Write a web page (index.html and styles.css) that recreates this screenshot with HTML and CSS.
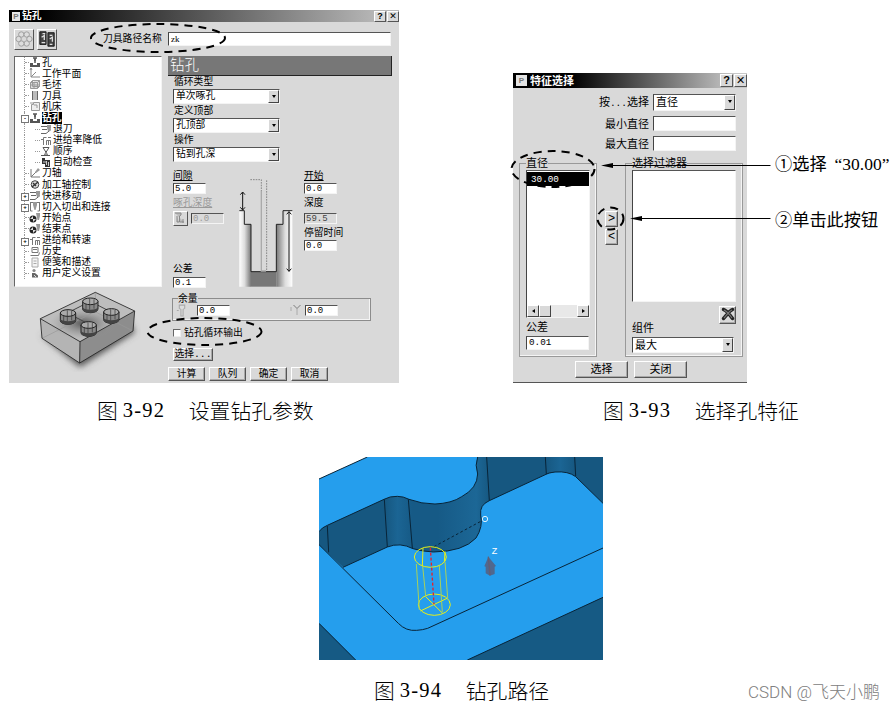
FILE: index.html
```
<!DOCTYPE html>
<html lang="zh-CN">
<head>
    <meta charset="utf-8">
    <title>钻孔</title>
    <link rel="stylesheet" href="styles.css">
</head>
<body>
    <!-- tree icons -->
    <svg class="sprite" width="0" height="0">
        <symbol id="i-hole" viewBox="0 0 12 11"><path d="M1 6h3v2h4V6h3v4H1z" fill="#555"/><path d="M4 1h4M6 1v5M5 3h2" stroke="#555" stroke-width="1.5"/></symbol>
        <symbol id="i-plane" viewBox="0 0 12 11"><path d="M2 0v9h9M2 9l5-5M1 2l1-2 1 2" stroke="#888" fill="none"/></symbol>
        <symbol id="i-block" viewBox="0 0 12 11"><path d="M1.500 3.500l2-2h7v6l-2 2h-7zM1.500 3.500h7v6M8.500 3.500l2-2M3.500 1.500v6h7M1 6h9M5 3v7" fill="#ddd" stroke="#999"/></symbol>
        <symbol id="i-tool" viewBox="0 0 12 11"><path d="M3 1h6v9H3z" fill="#bbb"/><path d="M3.500 1v9M8.500 1v9" stroke="#666"/></symbol>
        <symbol id="i-machine" viewBox="0 0 12 11"><path d="M2.500 9.500v-6h2v-2h6v8zM1 2h3M5 4h3v3" fill="#eee" stroke="#999"/></symbol>
        <symbol id="i-retract" viewBox="0 0 12 11"><path d="M1 2.500h6M2 5.500h5M1 9.500h5l5-4" stroke="#666" fill="none"/><path d="M7 1h4v3l-1 3H8L7 4z" fill="#999"/></symbol>
        <symbol id="i-feed" viewBox="0 0 12 11"><path d="M1 4.500h3M3.500 10V2.500h3M6.500 10V5.500h4V10M8 2.500h3M8.500 6v4" stroke="#777" fill="none"/></symbol>
        <symbol id="i-order" viewBox="0 0 12 11"><path d="M3 1.500h6L4 9.500M9 1.500H3l5 8M1 9.500h9" stroke="#555" fill="none"/><path d="M4 9l2-3 2 3z" fill="#999"/></symbol>
        <symbol id="i-check" viewBox="0 0 12 11"><path d="M2 1h3v2h5v7H5V7H2z" fill="#333"/><path d="M3 5h3M6.500 4v4M8.500 5v4" stroke="#ccc"/></symbol>
        <symbol id="i-axis" viewBox="0 0 12 11"><path d="M2 1v8h9M2 9l6-6" stroke="#777" fill="none"/><path d="M6 4l3-4 2 2-4 3z" fill="#999"/></symbol>
        <symbol id="i-ctrl" viewBox="0 0 12 11"><circle cx="6" cy="5.500" r="3.800" fill="#ddd" stroke="#444"/><path d="M3 8l6-5M4 4l3 3" stroke="#333" stroke-width="1.400"/></symbol>
        <symbol id="i-link" viewBox="0 0 12 11"><path d="M1.500 1v9h2M10.500 1v9h-2M1 1.500h3M8 1.500h3" stroke="#777" fill="none"/><path d="M4 1h4v3L6.500 9h-1L4 4z" fill="#999"/></symbol>
        <symbol id="i-point" viewBox="0 0 12 11"><circle cx="4" cy="7" r="3.500" fill="#222"/><path d="M4 4v3H1zM4 7h3L4 10z" fill="#ddd"/><path d="M7 1h4v3l-1 4H8.500z" fill="#999"/></symbol>
        <symbol id="i-history" viewBox="0 0 12 11"><path d="M3 1.500h6v5H3zM4 3.500h4M1.500 9.500h8l1-3" stroke="#777" fill="none"/></symbol>
        <symbol id="i-note" viewBox="0 0 12 11"><path d="M3 1h6v9H3zM4.500 4h3M4.500 6.500h3" stroke="#aaa" fill="#f4f4f4"/></symbol>
        <symbol id="i-user" viewBox="0 0 12 11"><circle cx="5" cy="2.500" r="1.600" fill="#888"/><path d="M3 9.500V5h3l3 2.500v2z" fill="#666"/><path d="M5 7l2 2" stroke="#ddd"/></symbol>
        <symbol id="i-drill" viewBox="0 0 10 12"><path d="M2.500 1h5v3L6 5v6H4V5L2.500 4zM0 6h2" fill="#ddd" stroke="#aaa"/></symbol>
    </svg>

    <div class="page">
        <div class="row">
            <div class="figure figure-drill">
                <div class="dialog drill">
                    <div class="titlebar">
                        <span class="logo">P</span><span class="title">钻孔</span>
                        <span class="winbtn">?</span><span class="winbtn">✕</span>
                    </div>
                    <div class="toolbar">
                        <span class="toolbtn"><svg viewBox="0 0 20 20" width="18" height="18"><g fill="#ddd" stroke="#999"><circle cx="7" cy="5" r="3"/><circle cx="13" cy="5" r="3"/><circle cx="16" cy="10" r="3"/><circle cx="13" cy="15" r="3"/><circle cx="7" cy="15" r="3"/><circle cx="4" cy="10" r="3"/></g></svg></span>
                        <span class="toolbtn"><svg viewBox="0 0 20 20" width="18" height="18"><path d="M2 2h7v14H2zM11 3h7v15h-7z" fill="#444" stroke="#111"/><path d="M5 4h3M4 8l3-2v5M4 14h4M13 6h3M13 10l3-2v5M13 16h3" stroke="#ddd" fill="none" stroke-width="1.500"/></svg></span>
                        <label>刀具路径名称</label>
                        <span class="input name">zk</span>
                    </div>
                    <div class="content">
                        <div class="side">
                            <ul class="tree">
                                <li><svg><use href="#i-hole"/></svg><span>孔</span></li>
                                <li><svg><use href="#i-plane"/></svg><span>工作平面</span></li>
                                <li><svg><use href="#i-block"/></svg><span>毛坯</span></li>
                                <li><svg><use href="#i-tool"/></svg><span>刀具</span></li>
                                <li><svg><use href="#i-machine"/></svg><span>机床</span></li>
                                <li class="open"><svg><use href="#i-hole"/></svg><span class="selected">钻孔</span></li>
                                <li class="sub"><svg><use href="#i-retract"/></svg><span>退刀</span></li>
                                <li class="sub"><svg><use href="#i-feed"/></svg><span>进给率降低</span></li>
                                <li class="sub"><svg><use href="#i-order"/></svg><span>顺序</span></li>
                                <li class="sub"><svg><use href="#i-check"/></svg><span>自动检查</span></li>
                                <li><svg><use href="#i-axis"/></svg><span>刀轴</span></li>
                                <li><svg><use href="#i-ctrl"/></svg><span>加工轴控制</span></li>
                                <li class="closed"><svg><use href="#i-retract"/></svg><span>快进移动</span></li>
                                <li class="closed"><svg><use href="#i-link"/></svg><span>切入切出和连接</span></li>
                                <li><svg><use href="#i-point"/></svg><span>开始点</span></li>
                                <li><svg><use href="#i-point"/></svg><span>结束点</span></li>
                                <li class="closed"><svg><use href="#i-feed"/></svg><span>进给和转速</span></li>
                                <li><svg><use href="#i-history"/></svg><span>历史</span></li>
                                <li><svg><use href="#i-note"/></svg><span>便笺和描述</span></li>
                                <li><svg><use href="#i-user"/></svg><span>用户定义设置</span></li>
                            </ul>
                            <svg class="block" viewBox="105 24 318 252" width="106" height="84">
                                <defs>
                                    <filter id="soft" x="-20%" y="-20%" width="140%" height="140%"><feGaussianBlur stdDeviation="9"/></filter>
                                    <radialGradient id="shade"><stop offset="0" stop-color="#555"/><stop offset="1" stop-color="#999" stop-opacity="0"/></radialGradient>
                                    <g id="bore"><path d="M-23 -12v23a23 11 0 0 0 46 0v-23z" fill="#888" stroke="#222" stroke-width="3"/><path d="M-23 5v7a23 11 0 0 0 46 0v-7a23 8 0 0 1-46 0z" fill="#444"/><ellipse cy="-12" rx="23" ry="10" fill="#aaa" stroke="#222" stroke-width="3"/><path d="M-13 -3v15M-2 -20v33M11 -18v28" stroke="#333" stroke-width="2"/></g>
                                </defs>
                                <path d="M123 165L240 262l165-105-20-40-145 60z" fill="#555" filter="url(#soft)"/>
                                <path d="M121 116L286 37l118 56-164 92z" fill="#bdbdbd"/>
                                <path d="M121 116l119 69-1 64-113-74z" fill="#b4b4b4"/>
                                <path d="M240 185l164-92-5 60-160 96z" fill="#8d8d8d"/>
                                <ellipse cx="250" cy="130" rx="100" ry="48" fill="url(#shade)"/>
                                <path d="M126 175L285 95l114 58M286 37v58" stroke="#999" stroke-width="2" fill="none"/>
                                <path d="M121 116L286 37l118 56-164 92zM121 116l5 59 113 74 160-96 5-60M240 185l-1 64" stroke="#222" stroke-width="2.500" fill="none"/>
                                <path d="M204 98l67-34 62 32M204 100l62 32" stroke="#444" stroke-width="3" fill="none"/>
                                <use href="#bore" x="271" y="76"/><use href="#bore" x="204" y="111"/><use href="#bore" x="334" y="108"/><use href="#bore" x="266" y="147"/>
                            </svg>
                        </div>
                        <div class="main">
                            <h2>钻孔</h2>
                            <div class="combos">
                                <label>循环类型</label><span class="combo">单次啄孔<i></i></span>
                                <label>定义顶部</label><span class="combo">孔顶部<i></i></span>
                                <label>操作</label><span class="combo">钻到孔深<i></i></span>
                            </div>
                            <div class="params">
                                <div class="col">
                                    <label class="link">间隙</label><span class="input num">5.0</span>
                                    <label class="link off">啄孔深度</label>
                                    <span class="peck"><b><svg width="12" height="12"><path d="M1 1h6v2L5.500 4v6H10M3 4v6h2M9 7v4" fill="#bbb" stroke="#888"/></svg></b><span class="input num off">0.0</span></span>
                                    <label class="tol">公差</label><span class="input num">0.1</span>
                                </div>
                                <svg class="section" viewBox="236 48 168 330" width="56" height="110">
                                    <defs>
                                        <linearGradient id="wl"><stop offset="0" stop-color="#fff"/><stop offset=".45" stop-color="#ddd"/><stop offset="1" stop-color="#777"/></linearGradient>
                                        <linearGradient id="wr"><stop offset="0" stop-color="#777"/><stop offset=".55" stop-color="#ddd"/><stop offset="1" stop-color="#fff"/></linearGradient>
                                    </defs>
                                    <path d="M240 149h15v41h20v187h-35z" fill="url(#wl)"/>
                                    <path d="M399 149h-28v41h-20v187h48z" fill="url(#wr)"/>
                                    <path d="M275 332h76v45h-76z" fill="#777"/>
                                    <path d="M240 149h15v41h20v142h76V190h20v-41h28" fill="none" stroke="#222" stroke-width="3"/>
                                    <path d="M273 56h33v34M322 58v272" stroke="#888" stroke-width="3" stroke-dasharray="5 3" fill="none"/>
                                    <path d="M306 90v240h14" stroke="#aaa" stroke-width="4" fill="none"/>
                                    <path d="M250 94v52M243 101l7-8 7 8M243 139l7 8 7-8M389 152v179M382 160l7-8 7 8M382 323l7 8 7-8" stroke="#111" stroke-width="3" fill="none"/>
                                </svg>
                                <div class="col">
                                    <label class="link">开始</label><span class="input num">0.0</span>
                                    <label class="tall">深度</label><span class="input num off depth">59.5</span>
                                    <label>停留时间</label><span class="input num">0.0</span>
                                </div>
                            </div>
                            <fieldset class="allow">
                                <legend>余量</legend>
                                <svg width="12" height="13" viewBox="0 0 10 12"><use href="#i-drill"/></svg>
                                <span class="input num">0.0</span>
                                <svg class="second" width="12" height="12" viewBox="0 0 12 12"><path d="M1 3v4M3 1l4 4v6M11 1L7 5M4 1l3 3 3-3" stroke="#aaa" fill="none"/></svg>
                                <span class="input num">0.0</span>
                            </fieldset>
                            <div class="check"><i></i><span>钻孔循环输出</span></div>
                            <span class="btn pick">选择...</span>
                            <div class="buttons">
                                <span class="btn">计算</span><span class="btn">队列</span><span class="btn">确定</span><span class="btn">取消</span>
                            </div>
                        </div>
                    </div>
                </div>
                <svg class="marks" width="390" height="373" viewBox="9 10 390 373">
                    <ellipse cx="158" cy="38" rx="67" ry="14"/>
                    <ellipse cx="204.500" cy="331.500" rx="57" ry="13.500"/>
                </svg>
                <div class="caption">图<em>3-92</em><span>设置钻孔参数</span></div>
            </div>

            <div class="figure figure-select">
                <div class="dialog select">
                    <div class="titlebar">
                        <span class="logo">P</span><span class="title">特征选择</span>
                        <span class="winbtn">?</span><span class="winbtn">✕</span>
                    </div>
                    <div class="filters">
                        <label>按<tt>...</tt>选择</label><span class="combo">直径<i></i></span>
                        <label>最小直径</label><span class="input"></span>
                        <label>最大直径</label><span class="input"></span>
                    </div>
                    <div class="groups">
                        <fieldset class="group">
                            <legend>直径</legend>
                            <div class="list sizes">
                                <div class="item">30.00</div>
                                <div class="scroll"><b class="arrow-l"></b><b></b><b class="arrow-r"></b></div>
                            </div>
                            <label>公差</label>
                            <span class="input">0.01</span>
                        </fieldset>
                        <div class="movers"><span class="btn">&gt;</span><span class="btn">&lt;</span></div>
                        <fieldset class="group wide">
                            <legend>选择过滤器</legend>
                            <div class="list"></div>
                            <span class="btn delete"><svg width="14" height="14"><path d="M2.500 2.500C5 3 9 8 11.500 11.500M11.500 2.500C8 4 5 9 2.500 11.500" stroke="#222" stroke-width="3.500" stroke-linecap="round" fill="none"/><path d="M3 3C5 4 9 8 11 11M11 3C8 4 5 9 3 11" stroke="#777" stroke-width="1.200" fill="none"/></svg></span>
                            <label>组件</label>
                            <span class="combo">最大<i></i></span>
                        </fieldset>
                    </div>
                    <div class="buttons"><span class="btn">选择</span><span class="btn">关闭</span></div>
                </div>
                <svg class="marks" width="270" height="310" viewBox="505 73 270 310">
                    <ellipse cx="553" cy="169" rx="41.500" ry="18"/>
                    <ellipse cx="610.500" cy="218.500" rx="13" ry="11"/>
                    <path class="leader" d="M604 165.500h166.500M633 218.500h137.500"/>
                    <path class="head" d="M601 165.500l12-2.500v5zM630 218.500l12-2.500v5z"/>
                </svg>
                <div class="notes">
                    <p>①选择<em class="quoted">“30.00”</em></p>
                    <p>②单击此按钮</p>
                </div>
                <div class="caption">图<em>3-93</em><span>选择孔特征</span></div>
            </div>
        </div>

        <div class="figure figure-path">
            <svg class="scene" viewBox="27 21 852 609" width="284" height="203">
                <defs>
                    <linearGradient id="wall" gradientUnits="userSpaceOnUse" x1="225" y1="0" x2="540" y2="0">
                        <stop offset="0" stop-color="#165780"/><stop offset=".12" stop-color="#1b6594"/><stop offset=".26" stop-color="#165a86"/>
                        <stop offset=".5" stop-color="#165a86"/><stop offset=".87" stop-color="#1c6796"/><stop offset="1" stop-color="#165780"/>
                    </linearGradient>
                    <linearGradient id="corner"><stop offset="0" stop-color="#165780"/><stop offset=".5" stop-color="#1b6594"/><stop offset="1" stop-color="#165780"/></linearGradient>
                </defs>
                <path d="M27 21h852v609H27z" fill="#259eed"/>
                <path d="M27 21h145L27 87z" fill="#fff"/>
                <path d="M27 520l110 110H27zM472 630l407-188v188z" fill="#165a84"/>
                <path d="M27 245Q36 232 52 226L222 148Q240 138 262 139Q280 139 297 148Q335 162 375 162Q425 160 455 140Q502 115 503 72Q494 45 503 21H879V160L797 80Q775 63 735 66Q715 68 708 73L538 152Q508 165 512 195Q520 230 498 264Q460 305 370 306Q335 304 309 296Q270 276 232 291L99 352L27 284z" fill="url(#wall)"/>
                <path d="M706 21h88l3 57Q775 63 735 66L709 73z" fill="url(#corner)"/>
                <g class="edge">
                    <path d="M172 21L27 87M27 245Q36 232 52 226L222 148Q240 138 262 139Q280 139 297 148Q335 162 375 162Q425 160 455 140Q502 115 503 72Q494 45 503 21"/>
                    <path d="M879 160L797 80Q775 63 735 66Q715 68 708 73L538 152Q508 165 512 195Q520 230 498 264Q460 305 370 306Q335 304 309 296Q270 276 232 291L99 352"/>
                    <path d="M27 284L265 520Q288 544 320 541Q338 540 353 535L879 294M27 520l110 110M472 630l407-188"/>
                    <path d="M52 228l4 79M223 148l9 143M295 148l12 146M530 21l8 131M706 21l3 51M794 21l3 57"/>
                    <path d="M372 290L516 212" stroke-dasharray="8 7"/>
                </g>
                <g fill="none" stroke="#e8f016" stroke-width="3">
                    <ellipse cx="361" cy="321" rx="48" ry="31"/>
                    <ellipse cx="373" cy="464" rx="48" ry="32"/>
                    <path d="M339 295l-2 53M405 304l-2 31M331 483l80-38M347 440l51 50"/>
                    <path d="M319 342l9 138M338 348l9 90M388 348l9 138M405 335l8 109" stroke="#a9d15a"/>
                </g>
                <path d="M361 293l11 170" stroke="#e8202c" stroke-width="4" stroke-dasharray="9 6" fill="none"/>
                <circle cx="525" cy="207" r="8" fill="none" stroke="#d8f0ff" stroke-width="3"/>
                <path d="M535 320l23 28-4 2v22l-14 5-13-7v-20l-4-1z" fill="#50688e"/><path d="M535 320l5 56" stroke="#655d72" stroke-width="4"/>
                <text x="545" y="313">Z</text>
            </svg>
            <div class="caption">图<em>3-94</em><span>钻孔路径</span></div>
        </div>
        <div class="watermark">CSDN @飞天小鹏</div>
    </div>
</body>
</html>
```
FILE: styles.css
```
* {
    box-sizing: border-box;
}

body {
    margin: 0;
    background-color: #ffffff;
    font-family: "Liberation Sans", "Noto Sans CJK SC", sans-serif;
    color: #000000;
}

.sprite {
    position: absolute;
}

.page {
    position: relative;
    width: 894px;
    height: 710px;
    padding-top: 10px;
    overflow: hidden;
}

.row {
    display: flex;
    align-items: flex-end;
    height: 417px;
    padding-left: 9px;
}

.figure {
    position: relative;
}

.figure-drill {
    width: 390px;
    margin-right: 114px;
}

.figure-select {
    width: 234px;
}

.figure-path {
    width: 284px;
    margin: 30px 0 0 319px;
}

.caption {
    display: flex;
    align-items: center;
    height: 30px;
    margin: 12px 0 2px 88px;
    font-family: "Noto Sans CJK SC", sans-serif;
    font-size: 20.8px;
    font-weight: 300;
    white-space: nowrap;
}

.caption em {
    flex: none;
    width: 66px;
    padding-left: 5px;
    margin-right: 5px;
    font: 20.5px "Liberation Serif", serif;
    letter-spacing: 1.2px;
}

.figure-select .caption {
    margin-left: 90px;
}

.figure-path .caption {
    margin: 15px 0 0 55px;
}

/* dialogs */
.dialog {
    background-color: #d9d9d9;
    font-size: 9.8px;
    line-height: 12px;
    font-family: "Liberation Mono", "Noto Sans CJK SC", monospace;
    white-space: nowrap;
}

.drill {
    height: 373px;
}

.titlebar {
    display: flex;
    align-items: center;
    height: 12px;
    padding-left: 3px;
    background: linear-gradient(to right, #000000 8%, #b8b8b8 95%);
    color: #ffffff;
    font-weight: bold;
}

.title {
    flex: 1;
    padding-top: 2px;
}

.logo {
    width: 8px;
    height: 9px;
    margin-right: 2px;
    background-color: #e4e4e4;
    color: #777777;
    font: bold 8px/9px "Liberation Sans", sans-serif;
    text-align: center;
}

.winbtn {
    width: 12px;
    height: 11px;
    margin-left: 1px;
    background-color: #d9d9d9;
    border: 1px solid;
    border-color: #ffffff #555555 #555555 #ffffff;
    color: #000000;
    font: bold 9px/9px "Liberation Sans", "DejaVu Sans", sans-serif;
    text-align: center;
}

.btn {
    display: block;
    background-color: #d9d9d9;
    border: 1px solid;
    border-color: #ffffff #555555 #555555 #ffffff;
    box-shadow: inset -1px -1px #a8a8a8;
    text-align: center;
}

.input, .combo, .list {
    display: block;
    background-color: #ffffff;
    border: 1px solid;
    border-color: #555555 #f4f4f4 #f4f4f4 #444444;
}

.combo {
    display: flex;
    justify-content: space-between;
    padding-left: 2px;
    line-height: 14px;
}

.combo i {
    width: 11px;
    background: #d9d9d9;
    border: 1px solid;
    border-color: #ffffff #444444 #444444 #ffffff;
}

.combo i::before {
    content: "";
    display: block;
    margin: 4px auto 0;
    width: 0;
    border: 2.5px solid transparent;
    border-top: 3px solid #000000;
    border-bottom: 0;
}

.off {
    background-color: #d9d9d9;
    color: #999999;
}

.depth {
    color: #444444;
}

.toolbar {
    display: flex;
    height: 34px;
    padding: 7px 8px 0 5px;
}

.toolbtn {
    width: 20px;
    height: 21px;
    margin-right: 3px;
    border: 1px solid;
    border-color: #ffffff #555555 #555555 #ffffff;
}

.toolbar label {
    width: 59px;
    margin: 5px 6px 0 43px;
}

.toolbar .name {
    flex: 1;
    height: 14px;
    margin-top: 3px;
    padding-left: 2px;
    font: 9px/12px "Liberation Serif", serif;
}

.content {
    display: flex;
    padding-left: 5px;
}

.side {
    width: 148px;
    margin-right: 6px;
}

.tree {
    height: 231px;
    margin: 0;
    padding: 0 0 0 9px;
    background-color: #ffffff;
    border: 1px solid;
    border-color: #666666 #f4f4f4 #f4f4f4 #666666;
    list-style: none;
}

.tree li {
    position: relative;
    display: flex;
    align-items: center;
    height: 11.1px;
    padding-left: 4px;
    border-left: 1px dotted #999999;
}

.tree li::before {
    content: "";
    width: 4px;
    margin-left: -4px;
    border-top: 1px dotted #999999;
}

.tree li.sub {
    padding-left: 15px;
}

.tree li.sub::before {
    width: 5px;
    margin-left: -5px;
}

.tree span {
    padding-top: 2px;
}

.tree svg {
    width: 12px;
    height: 11px;
    margin-right: 1px;
}

.tree li.open::after, .tree li.closed::after {
    content: "+";
    position: absolute;
    left: -4px;
    top: 3px;
    width: 6px;
    height: 6px;
    border: 1px solid #777777;
    background-color: #ffffff;
    font: bold 6px/4px "Liberation Sans", sans-serif;
    text-align: center;
}

.tree li.open::after {
    content: "-";
}

.tree .selected {
    padding-top: 1px;
    background-color: #000000;
    color: #ffffff;
    font-weight: bold;
    line-height: 11px;
}

.block {
    display: block;
    margin: 1px 0 0 21px;
}

.main {
    width: 224px;
}

.main h2 {
    height: 20px;
    margin: 0 0 1px;
    padding-left: 2px;
    background-color: #777777;
    border-bottom: 1px solid #222222;
    border-right: 1px solid #222222;
    color: #ffffff;
    font-size: 14.5px;
    font-weight: 300;
    line-height: 21px;
}

.combos, .params, .check {
    padding-left: 5px;
}

.combos label {
    display: block;
    height: 12px;
    line-height: 12px;
    padding-left: 1px;
}

.combos .combo {
    width: 107px;
    height: 15px;
    margin-bottom: 2.2px;
}

.params {
    display: flex;
    height: 129px;
    padding-top: 6px;
}

.col {
    width: 64px;
}

.col label {
    display: block;
    height: 12px;
    line-height: 12px;
}

.col .num {
    margin-bottom: 4px;
}

.link {
    text-decoration: underline;
}

.col label.off {
    height: 13px;
}

.col label.tall {
    height: 15px;
}

.num {
    width: 33px;
    height: 11px;
    padding-left: 1px;
    font-size: 9px;
    line-height: 11px;
}

.peck {
    display: flex;
    height: 15px;
    align-items: center;
    justify-content: space-between;
    width: 51px;
}

.peck b {
    width: 15px;
    height: 15px;
    border: 1px solid;
    border-color: #ffffff #555555 #555555 #ffffff;
}

.col .peck .num {
    margin: 0;
}

.col label.tol {
    margin-top: 38px;
    height: 13px;
}

.section {
    margin: 6px 10px 0 1px;
}

.allow {
    display: flex;
    width: 199px;
    height: 27px;
    margin: 0 0 0 4px;
    padding: 0 0 0 3px;
    border: 1px solid #8c8c8c;
    box-shadow: inset -1px -1px #f4f4f4;
}

.allow legend {
    height: 10px;
    margin-left: 2px;
    padding: 0;
    line-height: 12px;
}

.allow .num {
    margin: 1px 0 0 9px;
}

.allow .second {
    margin-left: 60px;
}

.allow .second + .num {
    margin-left: 3px;
}

.check {
    display: flex;
    align-items: center;
    height: 25px;
}

.check span {
    padding-top: 2px;
}

.check i {
    width: 8px;
    height: 8px;
    margin-right: 3px;
    background-color: #ffffff;
    border: 1px solid;
    border-color: #666666 #eeeeee #eeeeee #666666;
}

.pick {
    width: 40px;
    height: 13px;
    margin: 2px 0 6px 5px;
    line-height: 12px;
}

.drill .buttons {
    display: flex;
    gap: 4px;
}

.drill .buttons .btn {
    width: 37px;
    height: 14px;
    line-height: 13px;
}

/* feature selection */
.select {
    height: 310px;
    border-bottom: 1px solid #555555;
    font-size: 11px;
}

.select .titlebar {
    height: 15px;
    background: linear-gradient(to right, #000000 25%, #c8c8c8 95%);
}

.select .logo {
    width: 11px;
    height: 11px;
    margin-right: 3px;
    line-height: 11px;
}

.select .winbtn {
    width: 13px;
    height: 13px;
    font-size: 11px;
    line-height: 11px;
}

.filters {
    display: grid;
    grid-template-columns: 136px 83px;
    grid-template-rows: 17px 15px 15px;
    row-gap: 5px;
    column-gap: 4px;
    padding-top: 6px;
    text-align: right;
    line-height: 18px;
}

.filters .combo {
    line-height: 17px;
}

.filters tt {
    font: 9.5px "Liberation Mono", monospace;
}

.groups {
    display: flex;
    padding: 6px 0 0 6px;
    height: 208px;
}

.group {
    width: 78px;
    height: 200px;
    min-width: 0;
    margin: 0;
    padding: 0 6px;
    border: 1px solid #999999;
    box-shadow: inset -1px -1px #f4f4f4;
}

.group legend {
    height: 13px;
    padding: 0;
    line-height: 15px;
}

.group.wide {
    width: 118px;
}

.list {
    height: 132px;
}

.list.sizes {
    display: flex;
    flex-direction: column;
    justify-content: space-between;
    width: 64px;
    height: 148px;
}

.item {
    height: 14px;
    margin-top: 1px;
    padding-left: 4px;
    background-color: #000000;
    color: #ffffff;
    font-size: 9.3px;
    line-height: 15px;
}

.scroll {
    display: flex;
    height: 12px;
    background-color: #e8e8e8;
}

.scroll b {
    display: flex;
    justify-content: center;
    align-items: center;
    width: 12px;
    background-color: #d9d9d9;
    border: 1px solid;
    border-color: #ffffff #444444 #444444 #ffffff;
}

.scroll .arrow-r {
    margin-left: auto;
}

.arrow-l::before, .arrow-r::before {
    content: "";
    border: 2.5px solid transparent;
    border-right: 3px solid #000000;
    border-left: 0;
}

.arrow-r::before {
    border-left: 3px solid #000000;
    border-right: 0;
}

.group label {
    display: block;
    height: 18px;
    line-height: 21px;
}

.group .input {
    width: 63px;
    height: 14px;
    padding-left: 2px;
    font-size: 9.3px;
}

.group .combo {
    width: 102px;
    height: 16px;
    line-height: 16px;
}

.delete {
    width: 17px;
    height: 18px;
    margin: 4px 0 -5px auto;
}

.movers {
    display: flex;
    flex-direction: column;
    gap: 2px;
    width: 28px;
    padding: 54px 0 0 8px;
    font-size: 12px;
    line-height: 14px;
}

.movers .btn {
    width: 13px;
    height: 16px;
}

.select .buttons {
    display: flex;
    gap: 6px;
    padding: 2px 0 0 62px;
}

.select .buttons .btn {
    width: 53px;
    height: 17px;
    line-height: 17px;
}

/* marks drawn over the dialogs */
.marks {
    position: absolute;
    left: 0;
    top: 0;
    fill: none;
    stroke: #000000;
    stroke-width: 2;
    stroke-dasharray: 8 6;
}

.figure-select .marks {
    left: -8px;
}

.marks .leader {
    stroke-width: 1;
    stroke-dasharray: none;
}

.marks .head {
    fill: #000000;
    stroke: none;
}

.notes {
    position: absolute;
    left: 262px;
    top: 77px;
    font-family: "Noto Sans CJK SC", sans-serif;
    font-size: 17.2px;
    white-space: nowrap;
}

.notes p {
    height: 56px;
    margin: 0;
    line-height: 26px;
}

.notes .quoted {
    margin-left: 8px;
    font: 17.5px "Liberation Serif", serif;
}

.scene {
    display: block;
}

.scene .edge {
    fill: none;
    stroke: #082438;
    stroke-width: 3;
}

.scene text {
    fill: #ffffff;
    font: 27px "Liberation Sans", sans-serif;
}

.watermark {
    position: absolute;
    right: 14px;
    bottom: 6px;
    color: #808080;
    font: 300 17px/24px Roboto, "Noto Sans CJK SC", sans-serif;
}
```
